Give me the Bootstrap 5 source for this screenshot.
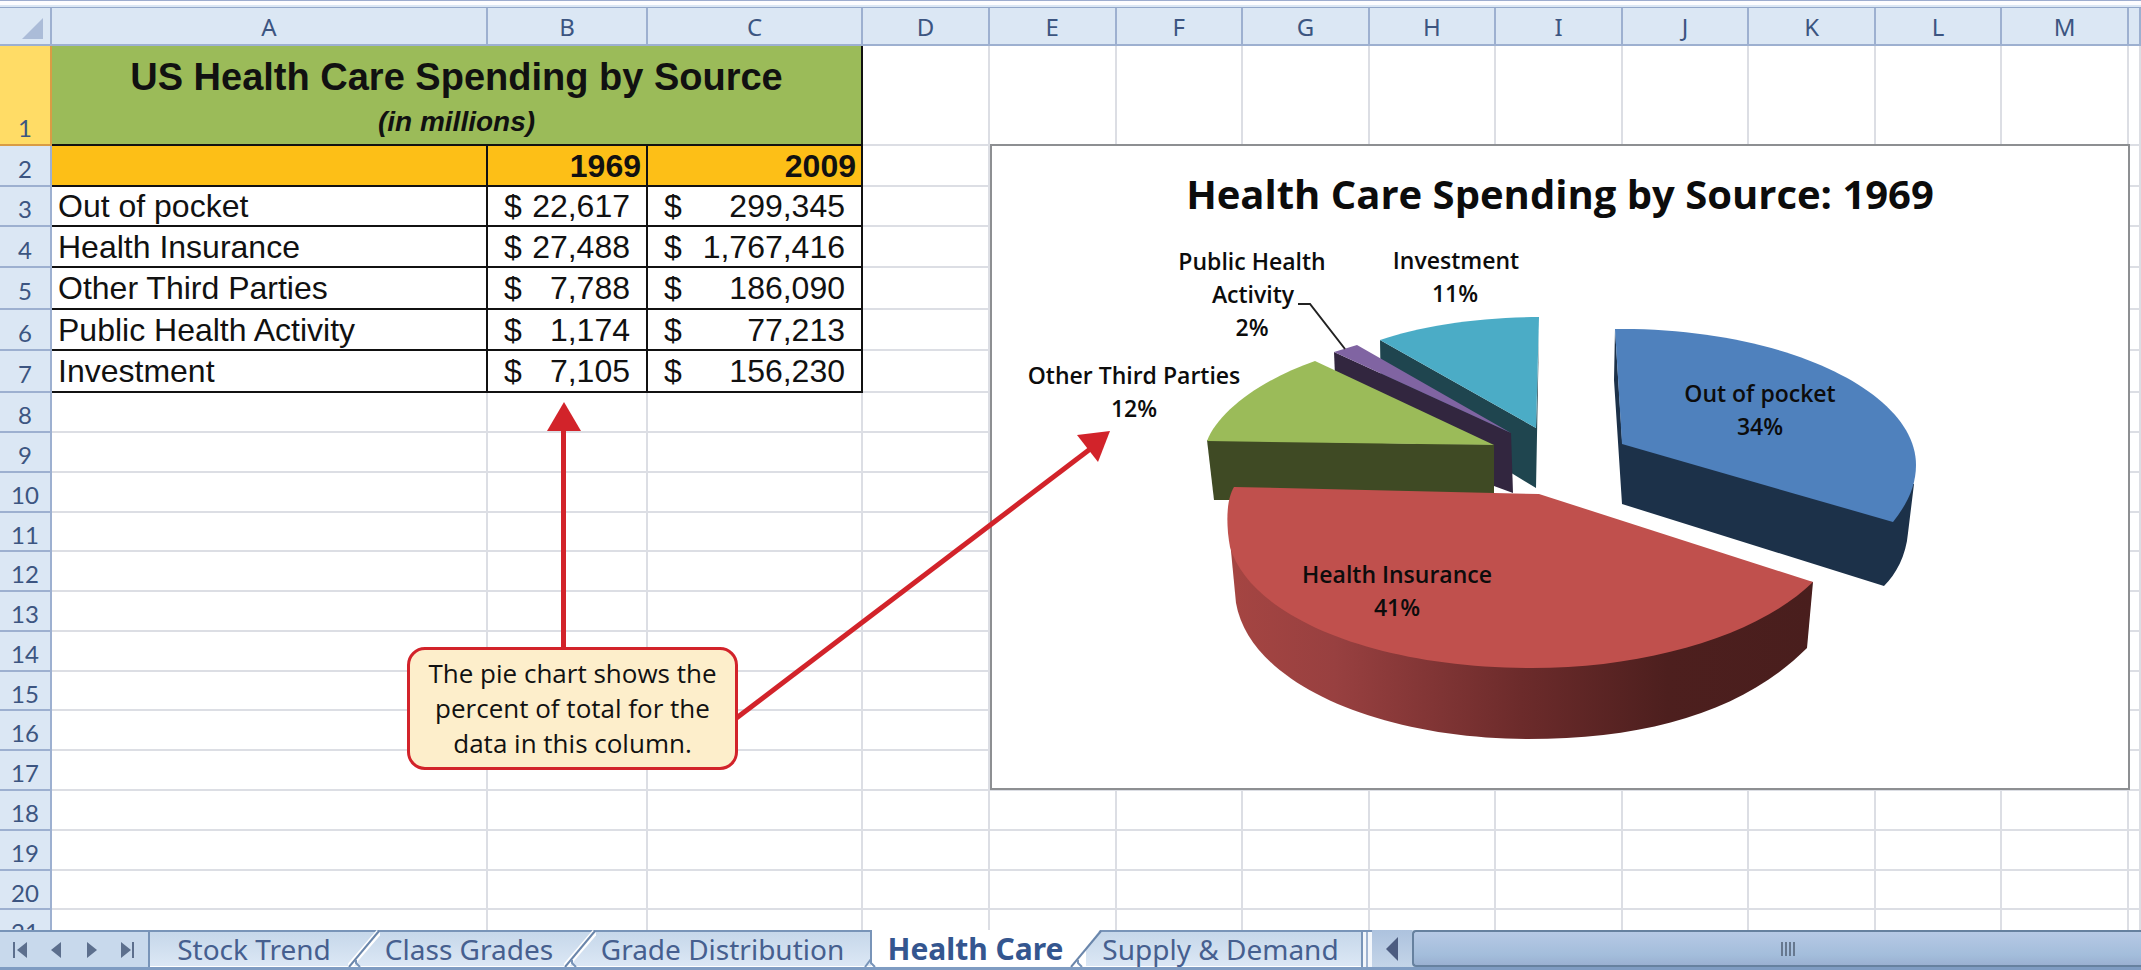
<!DOCTYPE html>
<html lang="en">
<head>
<meta charset="utf-8">
<meta name="viewport" content="width=device-width, initial-scale=1">
<title>Health Care – Workbook</title>
<link rel="stylesheet" href="https://cdn.jsdelivr.net/npm/bootstrap@5.3.0/dist/css/bootstrap.min.css">
<style>
  body { font-family: "Noto Sans", sans-serif; color: #111; background: #fff; }
  .strip { height: 8px; background: linear-gradient(#9dadcf 0 1px, #fdfdff 1px 5px, #dbe7f4 5px 7px, #93a8ca 7px); }

  /* worksheet grid */
  .sheet { min-height: 0; }
  .grid { table-layout: fixed; width: 100%; border-collapse: separate; border-spacing: 0; line-height: 1; }
  .grid th, .grid td { padding: 0; height: 40px; border: 0 solid #dcdee4; border-width: 0 2px 2px 0; overflow: hidden; white-space: nowrap; vertical-align: middle; }
  .grid thead th, .grid tbody th { background: #dbe7f4; border-color: #9db0d0; color: #3c5581; font: 400 24px/24px Lato, sans-serif; text-align: center; }
  .grid thead th { height: 38px; font-family: "Noto Sans", sans-serif; }
  .grid thead th + th { padding-top: 2px; }
  .grid tbody th { padding-top: 6px; }
  .grid .h39 > * { height: 39px; }
  .grid .h41 > * { height: 41px; }
  .grid .h42 > * { height: 42px; }
  .grid .title-row > * { height: 100px; }
  .grid tbody .row-on { padding-bottom: 4px; background: #ffdc66; border-color: #d99c44; vertical-align: bottom; }
  .c-head { width: 52px; } .c-a { width: 436px; } .c-b { width: 160px; } .c-c { width: 215px; } .c-d { width: 127px; } .c-n { width: 12px; }

  /* data range */
  .grid .cell { border-color: #111; font: 400 32px/36px "Liberation Sans", sans-serif; }
  .grid .banner { padding-top: 8px; background: #9bbb59; text-align: center; font-weight: 700; }
  .banner-title { font-size: 38px; line-height: 46px; }
  .banner-sub { font-size: 28px; line-height: 44px; font-style: italic; }
  .grid .year { background: #fdbf17; text-align: right; padding-right: 5px; font-weight: 700; }
  .grid .item { padding-left: 6px; }
  .grid .money { padding: 0 16px; }

  /* floating objects */
  .chart { top: 136px; left: 990px; right: 11px; border: 2px solid #8d8f92; background: #fff; }
  .chart svg { display: block; width: 100%; font-family: "Open Sans", sans-serif; font-size: 23px; font-weight: 600; text-anchor: middle; fill: #0c0c0c; }
  .chart .chart-title { font-size: 40px; font-weight: 700; }
  .arrows { top: -8px; left: 0; pointer-events: none; }
  .note { top: 639px; left: 407px; width: 331px; padding: 6px 0; border: 3px solid #d2232a; border-radius: 18px; background: #fdeecb; font: 400 26px/35px "Open Sans", sans-serif; }

  /* sheet tabs and scroll bar */
  .bar { display: grid; grid-template-columns: 148px 216px 216px 291px 215px 275px 11px 40px 1fr; height: 40px; border-bottom: 3px solid #7f9cc2; background: #c8d9ec; }
  .bar > * { border-top: 2px solid #7894b8; }
  .bar button { padding: 0; border: 0; background: none; line-height: 0; }
  .bar .tab { position: relative; padding: 0 6px 2px 0; border-top: 2px solid #7894b8; background: linear-gradient(#c6d7ea, #dce8f5); box-shadow: inset 0 -1px #fff; color: #465f8f; font: 400 28px/32px "Noto Sans", sans-serif; white-space: nowrap; }
  .bar .first { border-left: 2px solid #7894b8; }
  .bar .tab.on { border-color: #fff; background: #fff; color: #34568f; font-size: 30px; font-weight: 700; }
  .bar .tab svg { position: absolute; z-index: 1; right: -16px; top: -2px; }
  .split { border-left: 2px solid #7894b8; background: #f2f6fb; box-shadow: inset -4px 0 #f2f6fb, inset -6px 0 #9fb3d0; }
  .bar .left-btn { background: linear-gradient(#adc2de, #c4d5e8); }
  .bar .thumb { padding-left: 20px; border: 2px solid #66819f; border-right: 0; border-radius: 4px 0 0 4px; background: linear-gradient(#b6c9e5, #a3bddb 70%, #9ab0d1); }
</style>
</head>
<body class="vh-100 d-flex flex-column overflow-hidden">

<div class="strip flex-shrink-0"></div>

<main class="sheet flex-fill position-relative overflow-hidden">
  <table class="grid">
    <colgroup><col class="c-head"><col class="c-a"><col class="c-b"><col class="c-c"><col class="c-d"><col span="9"><col class="c-n"></colgroup>
    <thead>
      <tr>
        <th><svg width="50" height="36" viewBox="0 0 50 36" class="d-block" role="img" aria-label="Select all"><path d="M22 31H43V10Z" fill="#abbcd8"/></svg></th>
        <th>A</th><th>B</th><th>C</th><th>D</th><th>E</th><th>F</th><th>G</th><th>H</th><th>I</th><th>J</th><th>K</th><th>L</th><th>M</th><th></th>
      </tr>
    </thead>
    <tbody>
      <tr class="title-row"><th class="row-on">1</th>
        <td class="cell banner" colspan="3"><div class="banner-title">US Health Care Spending by Source</div><div class="banner-sub">(in millions)</div></td>
        <td></td><td></td><td></td><td></td><td></td><td></td><td></td><td></td><td></td><td></td><td></td></tr>
      <tr class="h41"><th>2</th><td class="cell year"></td><td class="cell year">1969</td><td class="cell year">2009</td><td></td><td></td><td></td><td></td><td></td><td></td><td></td><td></td><td></td><td></td><td></td></tr>
      <tr><th>3</th><td class="cell item">Out of pocket</td>
        <td class="cell money"><div class="d-flex justify-content-between"><span>$</span><span>22,617</span></div></td>
        <td class="cell money"><div class="d-flex justify-content-between"><span>$</span><span>299,345</span></div></td><td></td><td></td><td></td><td></td><td></td><td></td><td></td><td></td><td></td><td></td><td></td></tr>
      <tr class="h41"><th>4</th><td class="cell item">Health Insurance</td>
        <td class="cell money"><div class="d-flex justify-content-between"><span>$</span><span>27,488</span></div></td>
        <td class="cell money"><div class="d-flex justify-content-between"><span>$</span><span>1,767,416</span></div></td><td></td><td></td><td></td><td></td><td></td><td></td><td></td><td></td><td></td><td></td><td></td></tr>
      <tr class="h42"><th>5</th><td class="cell item">Other Third Parties</td>
        <td class="cell money"><div class="d-flex justify-content-between"><span>$</span><span>7,788</span></div></td>
        <td class="cell money"><div class="d-flex justify-content-between"><span>$</span><span>186,090</span></div></td><td></td><td></td><td></td><td></td><td></td><td></td><td></td><td></td><td></td><td></td><td></td></tr>
      <tr class="h41"><th>6</th><td class="cell item">Public Health Activity</td>
        <td class="cell money"><div class="d-flex justify-content-between"><span>$</span><span>1,174</span></div></td>
        <td class="cell money"><div class="d-flex justify-content-between"><span>$</span><span>77,213</span></div></td><td></td><td></td><td></td><td></td><td></td><td></td><td></td><td></td><td></td><td></td><td></td></tr>
      <tr class="h42"><th>7</th><td class="cell item">Investment</td>
        <td class="cell money"><div class="d-flex justify-content-between"><span>$</span><span>7,105</span></div></td>
        <td class="cell money"><div class="d-flex justify-content-between"><span>$</span><span>156,230</span></div></td><td></td><td></td><td></td><td></td><td></td><td></td><td></td><td></td><td></td><td></td><td></td></tr>
      <tr><th>8</th><td></td><td></td><td></td><td></td><td></td><td></td><td></td><td></td><td></td><td></td><td></td><td></td><td></td><td></td></tr>
      <tr><th>9</th><td></td><td></td><td></td><td></td><td></td><td></td><td></td><td></td><td></td><td></td><td></td><td></td><td></td><td></td></tr>
      <tr><th>10</th><td></td><td></td><td></td><td></td><td></td><td></td><td></td><td></td><td></td><td></td><td></td><td></td><td></td><td></td></tr>
      <tr class="h39"><th>11</th><td></td><td></td><td></td><td></td><td></td><td></td><td></td><td></td><td></td><td></td><td></td><td></td><td></td><td></td></tr>
      <tr><th>12</th><td></td><td></td><td></td><td></td><td></td><td></td><td></td><td></td><td></td><td></td><td></td><td></td><td></td><td></td></tr>
      <tr><th>13</th><td></td><td></td><td></td><td></td><td></td><td></td><td></td><td></td><td></td><td></td><td></td><td></td><td></td><td></td></tr>
      <tr><th>14</th><td></td><td></td><td></td><td></td><td></td><td></td><td></td><td></td><td></td><td></td><td></td><td></td><td></td><td></td></tr>
      <tr class="h39"><th>15</th><td></td><td></td><td></td><td></td><td></td><td></td><td></td><td></td><td></td><td></td><td></td><td></td><td></td><td></td></tr>
      <tr><th>16</th><td></td><td></td><td></td><td></td><td></td><td></td><td></td><td></td><td></td><td></td><td></td><td></td><td></td><td></td></tr>
      <tr><th>17</th><td></td><td></td><td></td><td></td><td></td><td></td><td></td><td></td><td></td><td></td><td></td><td></td><td></td><td></td></tr>
      <tr><th>18</th><td></td><td></td><td></td><td></td><td></td><td></td><td></td><td></td><td></td><td></td><td></td><td></td><td></td><td></td></tr>
      <tr><th>19</th><td></td><td></td><td></td><td></td><td></td><td></td><td></td><td></td><td></td><td></td><td></td><td></td><td></td><td></td></tr>
      <tr class="h39"><th>20</th><td></td><td></td><td></td><td></td><td></td><td></td><td></td><td></td><td></td><td></td><td></td><td></td><td></td><td></td></tr>
      <tr><th>21</th><td></td><td></td><td></td><td></td><td></td><td></td><td></td><td></td><td></td><td></td><td></td><td></td><td></td><td></td></tr>
    </tbody>
  </table>

  <figure class="chart position-absolute m-0">
    <svg viewBox="992 146 1136 642" role="img" aria-label="Health Care Spending by Source: 1969">
      <defs>
        <linearGradient id="rim" gradientUnits="userSpaceOnUse" x1="1230" y1="0" x2="1813" y2="0">
          <stop offset="0" stop-color="#a54542"/><stop offset=".18" stop-color="#984040"/><stop offset=".5" stop-color="#6c2b2b"/><stop offset=".75" stop-color="#4d1f1e"/><stop offset="1" stop-color="#491e1d"/>
        </linearGradient>
      </defs>
      <!-- Investment -->
      <path fill="#1f454f" d="M1380 340L1536 428L1539 330L1536 488L1513 474L1381 400Z"/>
      <path fill="#4bacc6" d="M1380 340C1420 326 1480 317 1539 317L1536 428Z"/>
      <!-- Public Health Activity -->
      <path fill="#32263f" d="M1334 352L1511 433L1513 493L1494 486L1336 400Z"/>
      <path fill="#8064a2" d="M1334 352L1357 345L1511 433Z"/>
      <!-- Other Third Parties -->
      <path fill="#3f4a24" d="M1207 440L1494 445V500H1214Z"/>
      <path fill="#9bbb59" d="M1207 441C1218 412 1260 380 1315 361L1494 445Z"/>
      <!-- Out of pocket -->
      <path fill="#1c3149" d="M1615 329L1614 380L1622 504L1884 586C1896 574 1906 556 1908 533L1914 484L1622 440Z"/>
      <path fill="#4f81bd" d="M1615 329C1780 327 1916 390 1916 465C1916 485 1908 503 1893 522L1622 444Z"/>
      <!-- Health Insurance -->
      <path fill="url(#rim)" d="M1228 520L1236 603C1250 684 1380 739 1528 739C1650 739 1745 710 1807 648L1813 582Z"/>
      <path fill="#c0504d" d="M1234 487L1539 494L1813 582C1760 634 1650 668 1532 668C1370 668 1250 615 1230 547C1226 525 1226 500 1234 487Z"/>
      <path fill="none" stroke="#222" stroke-width="2" d="M1298 304H1310L1345 349"/>
      <text class="chart-title" x="1560" y="209">Health Care Spending by Source: 1969</text>
      <text x="1252" y="270">Public Health</text>
      <text x="1253" y="303">Activity</text>
      <text x="1252" y="336">2%</text>
      <text x="1456" y="269">Investment</text>
      <text x="1455" y="302">11%</text>
      <text x="1134" y="384">Other Third Parties</text>
      <text x="1134" y="417">12%</text>
      <text x="1760" y="402">Out of pocket</text>
      <text x="1760" y="435">34%</text>
      <text x="1397" y="583">Health Insurance</text>
      <text x="1397" y="616">41%</text>
    </svg>
  </figure>

  <svg class="arrows position-absolute" width="1120" height="780" viewBox="0 0 1120 780" fill="#d2232a" stroke="none" aria-hidden="true">
    <path d="M561 430H566V650H561Z"/><path d="M564 402L581 431H547Z"/>
    <path d="M735 716L1090 446L1093 450L738 720Z"/><path d="M1110 431L1077 435L1098 462Z"/>
  </svg>
  <div class="note position-absolute text-center">The pie chart shows the<br>percent of total for the<br>data in this column.</div>
</main>

<nav class="bar flex-shrink-0" aria-label="Worksheets">
  <div class="d-flex align-items-center justify-content-between px-2">
    <button aria-label="First sheet"><svg width="26" height="20" viewBox="0 0 26 20" fill="#5c6f8d"><path d="M5 2h2v16H5zM19 2v16L9 10Z"/></svg></button>
    <button aria-label="Previous sheet"><svg width="26" height="20" viewBox="0 0 26 20" fill="#5c6f8d"><path d="M18 2v16L8 10Z"/></svg></button>
    <button aria-label="Next sheet"><svg width="26" height="20" viewBox="0 0 26 20" fill="#5c6f8d"><path d="M8 2v16L18 10Z"/></svg></button>
    <button aria-label="Last sheet"><svg width="26" height="20" viewBox="0 0 26 20" fill="#5c6f8d"><path d="M7 2v16L17 10ZM18 2h2v16h-2z"/></svg></button>
  </div>
  <button class="tab first">Stock Trend<svg width="32" height="37" viewBox="0 0 32 37"><path d="M31 2L1 37" stroke="#fff" stroke-width="6"/><path d="M31 1L1 37" stroke="#6a86ab" stroke-width="2"/><path d="M8 30V33L12 37" fill="none" stroke="#7894b8" stroke-width="2"/></svg></button>
  <button class="tab">Class Grades<svg width="32" height="37" viewBox="0 0 32 37"><path d="M31 2L1 37" stroke="#fff" stroke-width="6"/><path d="M31 1L1 37" stroke="#6a86ab" stroke-width="2"/><path d="M8 30V33L12 37" fill="none" stroke="#7894b8" stroke-width="2"/></svg></button>
  <button class="tab">Grade Distribution<svg width="32" height="37" viewBox="0 0 32 37"><path d="M16 0V33L20 37M16 29L10 37" fill="none" stroke="#7894b8" stroke-width="2"/></svg></button>
  <button class="tab on" aria-current="page">Health Care<svg width="32" height="37" viewBox="0 0 32 37"><path d="M0 0H30L1 37H0Z" fill="#fff"/><path d="M31 1L1 37" stroke="#6a86ab" stroke-width="2"/><path d="M8 30V33L12 37" fill="none" stroke="#7894b8" stroke-width="2"/></svg></button>
  <button class="tab">Supply &amp; Demand</button>
  <div class="split"></div>
  <button class="left-btn" aria-label="Scroll left"><svg width="14" height="26" viewBox="0 0 14 26"><path d="M13 1V25L1 13Z" fill="#4c5c80"/></svg></button>
  <div class="thumb d-flex align-items-center justify-content-center">
    <svg width="14" height="14" viewBox="0 0 14 14" fill="#66788f"><path d="M0 0h2v14H0zM4 0h2v14H4zM8 0h2v14H8zM12 0h2v14h-2z"/></svg>
  </div>
</nav>

<script src="https://cdn.jsdelivr.net/npm/bootstrap@5.3.0/dist/js/bootstrap.bundle.min.js"></script>
</body>
</html>
